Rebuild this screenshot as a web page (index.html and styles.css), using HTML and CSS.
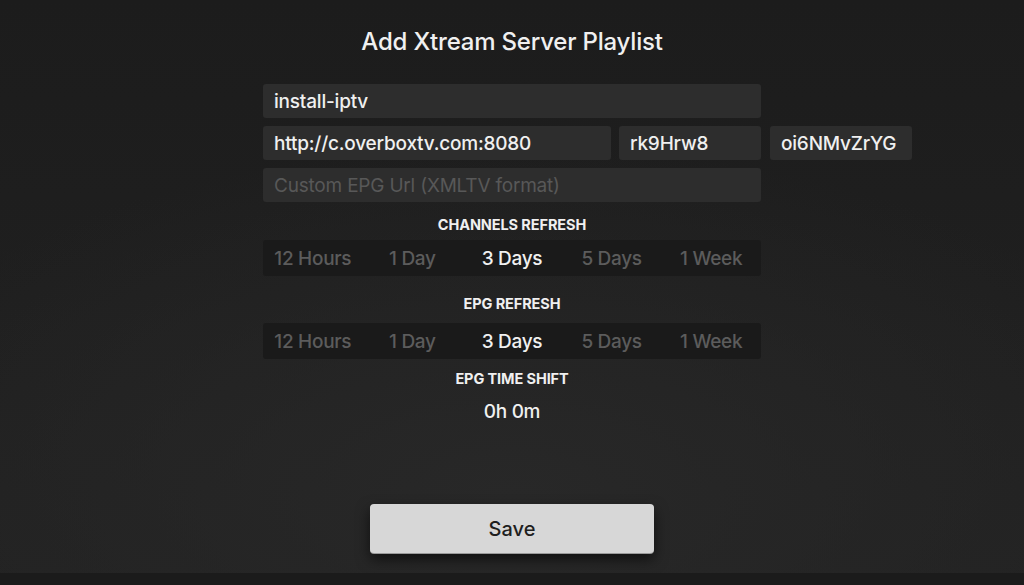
FILE: index.html
```html
<!DOCTYPE html>
<html lang="en">
<head>
  <meta charset="UTF-8">
  <meta name="viewport" content="width=device-width, initial-scale=1.0">
  <title>Add Xtream Server Playlist</title>
  <link rel="stylesheet" href="styles.css">
</head>
<body>

  <main class="screen">
    <h1 class="title">Add Xtream Server Playlist</h1>

    <form class="form">
      <div class="field">install-iptv</div>

      <div class="row">
        <div class="field field--url">http://c.overboxtv.com:8080</div>
        <div class="field field--small">rk9Hrw8</div>
        <div class="field field--small">oi6NMvZrYG</div>
      </div>

      <div class="field field--empty">Custom EPG Url (XMLTV format)</div>

      <!-- Channels refresh -->
      <h2 class="label">CHANNELS REFRESH</h2>
      <div class="segments">
        <span>12 Hours</span><span>1 Day</span><span class="on">3 Days</span><span>5 Days</span><span>1 Week</span>
      </div>

      <!-- EPG refresh -->
      <h2 class="label label--epg">EPG REFRESH</h2>
      <div class="segments segments--epg">
        <span>12 Hours</span><span>1 Day</span><span class="on">3 Days</span><span>5 Days</span><span>1 Week</span>
      </div>

      <!-- Time shift -->
      <h2 class="label label--shift">EPG TIME SHIFT</h2>
      <div class="value">0h 0m</div>

      <div class="actions">
        <button type="button" class="save">Save</button>
      </div>
    </form>
  </main>

  <div class="strip"></div>

</body>
</html>
```

FILE: styles.css
```css
:root{
  --text:#f0f0f0;
  --muted:#5c5c5c;
  --field:#2d2d2d;
  --seg:#1a1a1a;
}
*{margin:0;padding:0;box-sizing:border-box;font-family:Inter,'Liberation Sans',sans-serif;}
html,body{height:100%;}
body{
  background:
    radial-gradient(ellipse 70% 60% at 50% 85%,#282828 0%,rgba(40,40,40,0) 100%),
    linear-gradient(#1c1c1c,#222 100%);
  color:var(--text);
  overflow:hidden;
  display:flex;flex-direction:column;
}
.screen{flex:1;display:flex;flex-direction:column;align-items:center;}
.title{font-size:24px;font-weight:500;letter-spacing:-.2px;margin-top:28px;line-height:28px;}

.form{width:498px;margin-top:28px;display:flex;flex-direction:column;gap:8px;}
.row{display:flex;gap:8px;width:649px;}
.field{height:34px;background:var(--field);border-radius:3px;padding:0 11px;
       display:flex;align-items:center;font-size:19px;font-weight:500;letter-spacing:-.2px;}
.field--url{width:348px;}
.field--small{width:142px;}
.field--small+.field--small{margin-left:1px;}
.field--empty{color:#585858;font-weight:400;}

.label{font-size:14.5px;font-weight:700;text-align:center;line-height:16px;letter-spacing:-.1px;margin-top:7px;}
.label--epg{margin-top:12px;}
.label--shift{margin-top:4px;}
.segments{display:grid;grid-template-columns:repeat(5,1fr);height:36px;margin-top:-1px;
          background:var(--seg);border-radius:3px;align-items:center;}
.segments--epg{margin-top:3px;}
.segments span{text-align:center;font-size:19px;font-weight:500;color:var(--muted);letter-spacing:-.3px;}
.segments .on{color:var(--text);}
.value{text-align:center;font-size:19px;font-weight:500;line-height:23px;margin-top:5px;letter-spacing:-.3px;}

.actions{display:flex;justify-content:center;margin-top:73px;}
.save{width:284px;height:49px;border:none;border-radius:4px;background:#d7d7d7;color:#1e1e1e;
      font-size:20px;font-weight:500;box-shadow:0 1px 0 #9a9a9a,0 6px 14px rgba(0,0,0,.6);}

.strip{height:12px;background:#1b1b1b;}
```
